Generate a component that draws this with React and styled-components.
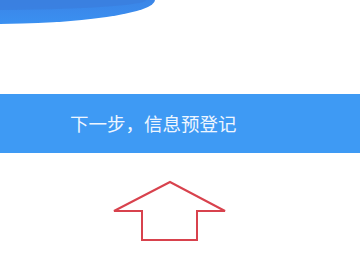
import React from "react";
import styled, { createGlobalStyle } from "styled-components";

const GlobalStyle = createGlobalStyle`
  body {
    margin: 0;
    background: #ffffff;
    font-family: "Noto Sans CJK SC", "Noto Sans", sans-serif;
  }
`;

function App() {
  return (
    <Page>
      <GlobalStyle />
      <TopWave viewBox="0 0 360 26" aria-hidden="true">
        <defs>
          <linearGradient id="waveFill" x1="0" y1="0" x2="0" y2="1">
            <stop offset="0" stopColor="#3b7edf" />
            <stop offset="0.45" stopColor="#3b84e6" />
            <stop offset="1" stopColor="#3a90f1" />
          </linearGradient>
        </defs>
        <ellipse cx="-10" cy="0" rx="165" ry="24" fill="url(#waveFill)" />
        <ellipse cx="-10" cy="0" rx="156" ry="10" fill="#3b7ddd" opacity="0.7" />
      </TopWave>

      <NextBar>
        <BarText>下一步，信息预登记</BarText>
      </NextBar>

      <ArrowRow>
        <svg width="116" height="62" viewBox="0 0 116 62">
          <polygon
            points="58,2 113,31 85,31 85,60 30,60 30,31 2,31"
            fill="none"
            stroke="#d8424d"
            strokeWidth="2"
            strokeLinejoin="miter"
          />
        </svg>
      </ArrowRow>
    </Page>
  );
}

const Page = styled.div`
  width: 360px;
  height: 270px;
  overflow: hidden;
  background: #ffffff;
`;

const TopWave = styled.svg`
  display: block;
  width: 360px;
  height: 26px;
`;

const NextBar = styled.div`
  margin-top: 68px;
  height: 59px;
  background: #3e9af4;
  display: flex;
  align-items: center;
  padding-left: 70px;
`;

const BarText = styled.span`
  color: #eef6ff;
  font-size: 18.5px;
  line-height: 1;
  letter-spacing: 0;
  white-space: nowrap;
`;

const ArrowRow = styled.div`
  margin-top: 27px;
  padding-left: 112px;
  display: flex;
`;

export default App;
